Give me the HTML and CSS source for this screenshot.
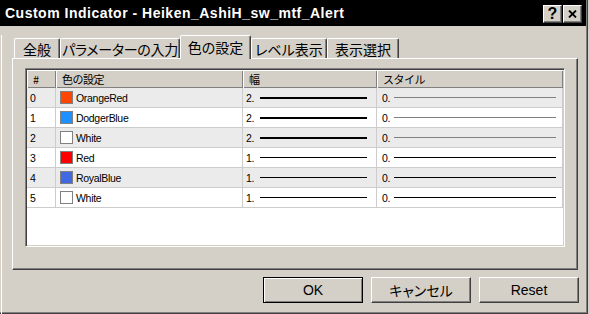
FILE: index.html
```html
<!DOCTYPE html>
<html lang="ja">
<head>
    <meta charset="UTF-8">
    <title>Custom Indicator</title>
    <link rel="stylesheet" href="styles.css">
</head>
<body>
    <div class="window">
        <div class="titlebar">
            <span class="title">Custom Indicator - Heiken_AshiH_sw_mtf_Alert</span>
            <div class="caption-buttons">
                <span class="cbtn help">?</span>
                <span class="cbtn close">
                    <svg width="9" height="8" viewBox="0 0 9 8"><path d="M1 0.5 L8 7.5 M8 0.5 L1 7.5" stroke="#000" stroke-width="1.8" fill="none"/></svg>
                </span>
            </div>
        </div>

        <div class="client">
            <!-- Tabs -->
            <div class="tabs">
                <div class="tab t-general">全般</div>
                <div class="tab t-params">パラメーターの入力</div>
                <div class="tab t-colors active">色の設定</div>
                <div class="tab t-levels">レベル表示</div>
                <div class="tab t-visual">表示選択</div>
            </div>

            <div class="panel">
                <div class="list">
                    <div class="grid head">
                        <div class="hcell">#</div>
                        <div class="hcell">色の設定</div>
                        <div class="hcell">幅</div>
                        <div class="hcell">スタイル</div>
                    </div>

                    <div class="grid row even">
                        <div class="cell num">0</div>
                        <div class="cell color"><span class="swatch" style="background:#ff4500"></span>OrangeRed</div>
                        <div class="cell width"><span class="val">2.</span><span class="line thick"></span></div>
                        <div class="cell style"><span class="val">0.</span><span class="line gray"></span></div>
                    </div>
                    <div class="grid row">
                        <div class="cell num">1</div>
                        <div class="cell color"><span class="swatch" style="background:#1e90ff"></span>DodgerBlue</div>
                        <div class="cell width"><span class="val">2.</span><span class="line thick"></span></div>
                        <div class="cell style"><span class="val">0.</span><span class="line gray"></span></div>
                    </div>
                    <div class="grid row even">
                        <div class="cell num">2</div>
                        <div class="cell color"><span class="swatch" style="background:#ffffff"></span>White</div>
                        <div class="cell width"><span class="val">2.</span><span class="line thick"></span></div>
                        <div class="cell style"><span class="val">0.</span><span class="line gray"></span></div>
                    </div>
                    <div class="grid row">
                        <div class="cell num">3</div>
                        <div class="cell color"><span class="swatch" style="background:#ff0000"></span>Red</div>
                        <div class="cell width"><span class="val">1.</span><span class="line"></span></div>
                        <div class="cell style"><span class="val">0.</span><span class="line"></span></div>
                    </div>
                    <div class="grid row even">
                        <div class="cell num">4</div>
                        <div class="cell color"><span class="swatch" style="background:#4169e1"></span>RoyalBlue</div>
                        <div class="cell width"><span class="val">1.</span><span class="line"></span></div>
                        <div class="cell style"><span class="val">0.</span><span class="line"></span></div>
                    </div>
                    <div class="grid row">
                        <div class="cell num">5</div>
                        <div class="cell color"><span class="swatch" style="background:#ffffff"></span>White</div>
                        <div class="cell width"><span class="val">1.</span><span class="line"></span></div>
                        <div class="cell style"><span class="val">0.</span><span class="line"></span></div>
                    </div>
                </div>
            </div>

            <!-- Dialog buttons -->
            <div class="buttons">
                <button class="btn default">OK</button>
                <button class="btn">キャンセル</button>
                <button class="btn">Reset</button>
            </div>
        </div>
    </div>
</body>
</html>
```

FILE: styles.css
```css
body {
    margin: 0;
    padding: 0;
    background: #d4d0c8;
    font-family: 'Liberation Sans', 'Noto Sans CJK JP', sans-serif;
    color: #000;
}

.window {
    width: 588px;
    height: 314px;
    box-sizing: border-box;
    background: #d4d0c8;
    box-shadow: inset -1px -1px #404040, inset -2px -2px #808080;
    overflow: hidden;
}

/* Title bar */
.titlebar {
    width: 586px;
    height: 26px;
    background: #000;
    display: flex;
    align-items: center;
    justify-content: space-between;
    padding: 0 4px 0 5px;
    box-sizing: border-box;
}

.title {
    color: #fff;
    font-size: 14px;
    font-weight: bold;
    letter-spacing: 0.5px;
    white-space: nowrap;
}

.caption-buttons {
    display: flex;
    gap: 1px;
    margin-top: 1px;
}

.cbtn {
    width: 19px;
    height: 18px;
    box-sizing: border-box;
    background: #d4d0c8;
    border: 1px solid;
    border-color: #fff #404040 #404040 #fff;
    box-shadow: inset -1px -1px #808080;
    display: flex;
    align-items: center;
    justify-content: center;
    font-size: 16px;
    font-weight: bold;
    line-height: 1;
}

/* Client area */
.client {
    margin-left: 1px;
    border-left: 1px solid #fff;
    height: 288px;
    padding-left: 10px;
    box-sizing: border-box;
}

/* Tabs */
.tabs {
    display: flex;
    align-items: flex-end;
    height: 23px;
    margin-top: 9px;
    padding-left: 2px;
    font-family: 'Noto Sans CJK JP', sans-serif;
    font-feature-settings: "palt";
    font-size: 14px;
}

.tab {
    height: 20px;
    box-sizing: border-box;
    border-top: 1px solid #fff;
    border-left: 1px solid #fff;
    border-right: 1px solid #404040;
    border-radius: 2px 2px 0 0;
    box-shadow: inset -1px 0 #808080;
    display: flex;
    align-items: center;
    justify-content: center;
    line-height: 1;
    white-space: nowrap;
}

.t-general { width: 46px; }
.t-params { width: 120px; letter-spacing: -0.3px; }
.t-colors { width: 71px; }
.t-levels { width: 76px; }
.t-visual { width: 72px; }

.tab.active {
    height: 24px;
    margin-bottom: -1px;
    padding-bottom: 2px;
    position: relative;
    z-index: 1;
    background: #d4d0c8;
}

/* Tab page */
.panel {
    width: 566px;
    height: 212px;
    box-sizing: border-box;
    border: 1px solid;
    border-color: #fff #404040 #404040 #fff;
    box-shadow: inset -1px -1px #808080;
    padding: 9px 0 0 12px;
}

.list {
    width: 540px;
    height: 179px;
    box-sizing: border-box;
    background: #fff;
    border: 1px solid;
    border-color: #808080 #fff #fff #808080;
    box-shadow: inset 1px 1px #404040, inset -1px -1px #d4d0c8;
    padding: 1px;
    font-size: 10.5px;
    letter-spacing: -0.3px;
}

.grid {
    display: grid;
    grid-template-columns: 29px 187px 134px 186px;
}

.hcell {
    height: 18px;
    box-sizing: border-box;
    background: #d4d0c8;
    box-shadow: inset 1px 1px #fff, inset -1px -1px #808080;
    padding-left: 6px;
    display: flex;
    align-items: center;
    font-family: 'Noto Sans CJK JP', sans-serif;
    font-size: 11px;
    letter-spacing: -0.5px;
}

.cell {
    height: 20px;
    box-sizing: border-box;
    border-right: 1px solid #cccccc;
    border-bottom: 1px solid #cccccc;
    display: flex;
    align-items: center;
    white-space: nowrap;
}

.row.even .cell {
    background: #ebebeb;
}

.num { padding-left: 3px; }
.color { padding-left: 4px; }
.width { padding-left: 3px; }
.style { padding-left: 5px; }

.swatch {
    width: 13px;
    height: 13px;
    box-sizing: border-box;
    border: 1px solid #808080;
    margin-right: 3px;
    flex: none;
}

.val {
    flex: none;
}

.width .val { width: 14px; }
.style .val { width: 12px; }

.line {
    display: block;
    height: 1px;
    background: #000;
}

.width .line { width: 107px; }
.style .line { width: 162px; }

.line.thick { height: 2px; }
.line.gray { background: #808080; }

/* Dialog buttons */
.buttons {
    display: flex;
    justify-content: flex-end;
    gap: 8px;
    margin-top: 7px;
    padding-right: 9px;
}

.btn {
    width: 100px;
    height: 26px;
    box-sizing: border-box;
    margin: 0;
    padding: 0;
    background: #d4d0c8;
    border: 1px solid;
    border-color: #fff #404040 #404040 #fff;
    box-shadow: inset -1px -1px #808080;
    font-family: 'Liberation Sans', 'Noto Sans CJK JP', sans-serif;
    font-feature-settings: "palt";
    font-size: 14px;
    color: #000;
}

.btn.default {
    border-color: #000;
    box-shadow: inset 1px 1px #fff, inset -1px -1px #808080;
}
```
